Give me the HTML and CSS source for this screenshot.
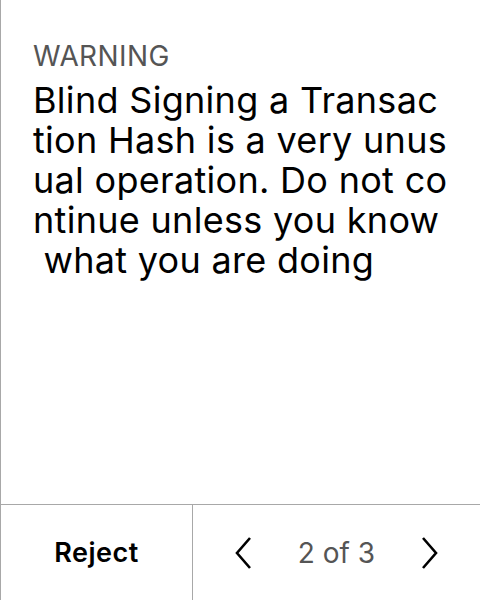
FILE: index.html
```html
<!DOCTYPE html>
<html>
<head>
<meta charset="utf-8">
<link rel="stylesheet" href="styles.css">
</head>
<body>
<div class="screen">
  <div class="content">
    <div class="title">WARNING</div>
    <div class="message">
      <div class="line">Blind Signing a Transac</div>
      <div class="line">tion Hash is a very unus</div>
      <div class="line">ual operation. Do not co</div>
      <div class="line">ntinue unless you know</div>
      <div class="line"> what you are doing</div>
    </div>
  </div>
  <div class="footer">
    <div class="reject">Reject</div>
    <div class="nav">
      <svg class="chev" width="16" height="32" viewBox="0 0 16 32"><path d="M15 1 L2 16 L15 31" fill="none" stroke="#000" stroke-width="2.6"/></svg>
      <span class="page">2 of 3</span>
      <svg class="chev" width="16" height="32" viewBox="0 0 16 32"><path d="M1 1 L14 16 L1 31" fill="none" stroke="#000" stroke-width="2.6"/></svg>
    </div>
  </div>
</div>
</body>
</html>
```

FILE: styles.css
```css
html, body {
  margin: 0;
  padding: 0;
  background: #fff;
}
body {
  font-family: Inter, "Noto Sans", sans-serif;
  width: 480px;
  height: 600px;
  overflow: hidden;
}
.screen {
  height: 600px;
  display: flex;
  flex-direction: column;
  border-left: 1px solid #a8a8a8;
  box-sizing: border-box;
}
.content {
  flex: 1;
  padding: 39px 0 0 32px;
}
.title {
  font-size: 28px;
  line-height: 34px;
  letter-spacing: 0.4px;
  color: #555;
}
.message {
  margin-top: 7px;
  font-size: 36px;
  line-height: 40px;
  letter-spacing: 0.3px;
  color: #000;
}
.line {
  white-space: pre;
}
.footer {
  height: 95px;
  border-top: 1px solid #a8a8a8;
  display: flex;
}
.reject {
  width: 191px;
  display: flex;
  align-items: center;
  justify-content: center;
  font-size: 27px;
  font-weight: 600;
  letter-spacing: 0.5px;
  color: #000;
}
.nav {
  flex: 1;
  border-left: 1px solid #a8a8a8;
  display: flex;
  align-items: center;
  justify-content: space-between;
  padding: 0 42px;
}
.page {
  font-size: 28px;
  color: #555;
}
.chev {
  display: block;
}
```
